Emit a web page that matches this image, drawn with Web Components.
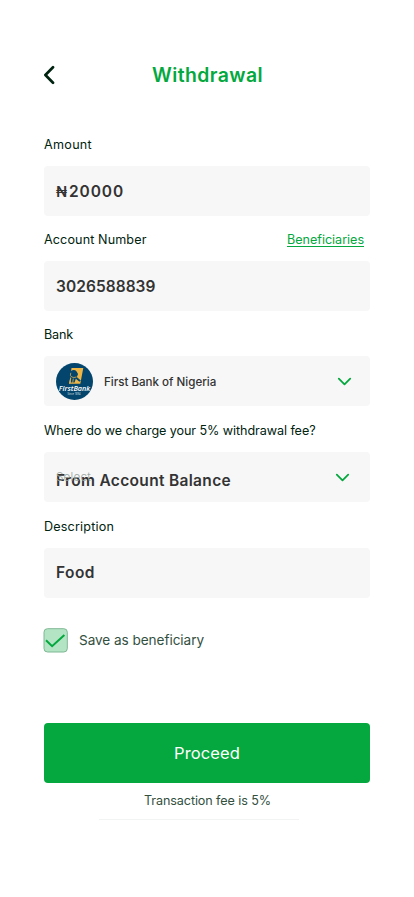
<!DOCTYPE html>
<html lang="en">
<head>
<meta charset="utf-8">
<title>Withdrawal</title>
<style>
html,body{margin:0;background:#fff}
body{font-family:Inter,"Liberation Sans",sans-serif;color:#002310}
</style>
</head>
<body>
<withdrawal-page></withdrawal-page>
<script>
const attach=(el,html)=>{el.attachShadow({mode:"open"}).innerHTML=html};

// Single line of text, tracked so that it fills the width given in "w".
customElements.define("tracked-text",class extends HTMLElement{
  connectedCallback(){
    if(this.shadowRoot)return;
    attach(this,`<style>:host{display:block;white-space:pre;flex:none}span{display:inline-block}:host([underlined]) span{text-decoration:underline;text-decoration-thickness:1px;text-underline-offset:2px;text-decoration-skip-ink:none}</style><span><slot></slot></span>`);
    const w=+this.getAttribute("w"),s=this.shadowRoot.querySelector("span");
    const n=this.textContent.length;
    this.style.width=w+"px";
    s.style.letterSpacing=((w-s.getBoundingClientRect().width)/n).toFixed(3)+"px";
  }
});

customElements.define("chevron-icon",class extends HTMLElement{
  constructor(){super();attach(this,`<style>:host{display:block;width:15px;height:9px}svg{display:block}</style>
  <svg width="15" height="9" viewBox="0 0 15 9" fill="none" stroke="#04a83e" stroke-width="1.8" stroke-linecap="round" stroke-linejoin="round"><path d="M1.8 1.7 7.5 7.3 13.2 1.7"/></svg>`)}
});

customElements.define("page-header",class extends HTMLElement{
  constructor(){super();attach(this,`<style>
  :host{display:grid;grid-template-columns:108px 1fr;align-items:center;height:30px;color:#04a83e;font-size:19.4px;font-weight:600;line-height:30px}
  svg{display:block}</style>
  <svg width="14" height="20" viewBox="0 0 14 20" fill="none" stroke="#002310" stroke-width="2.7" stroke-linecap="round" stroke-linejoin="round"><path d="M9 2.3 1.4 10 9 17.7"/></svg>
  <slot></slot>`)}
});

customElements.define("form-field",class extends HTMLElement{
  constructor(){super();attach(this,`<style>
  :host{display:block}
  .label{display:flex;justify-content:space-between;height:20px;font-size:12.6px;line-height:20px;margin-bottom:11px;padding-right:6px}
  .box{display:flex;align-items:center;box-sizing:border-box;height:50px;padding:0 12px;background:#f7f7f7;border-radius:4px;position:relative;color:#333;font-size:15.5px;font-weight:600;line-height:24px}
  ::slotted(.end){margin-left:auto}
  ::slotted([slot=action]){color:#04a83e}
  </style>
  <div class="label"><slot name="label"></slot><slot name="action"></slot></div>
  <div class="box"><slot></slot></div>`)}
});

customElements.define("bank-logo",class extends HTMLElement{
  constructor(){super();attach(this,`<style>:host{display:block;width:37px;height:37px;margin-right:11px}svg{display:block}</style>
  <svg width="37" height="37" viewBox="0 0 37 37">
  <circle cx="18.5" cy="18.5" r="18.5" fill="#03456d"/>
  <path d="M15.5 5H27.3L24.3 20.8H12.9L14.2 15Z" fill="#eeb545"/>
  <path d="M14.5 8.5Q18 5.8 20.6 8.4 22.6 10.4 21.4 12.8L20.8 14 24.8 17.6 23.4 18.8 19.8 15.8 18.6 19.5H14.8L14.8 15Q12.8 12 14.5 8.5Z" fill="#03456d"/>
  <path d="M14.8 9.8Q13.5 12.6 15.7 14 17.8 15 20.5 14M14.8 15 13.6 20.5M17.3 15.6 16.7 20" fill="none" stroke="#d9ae55" stroke-width=".8"/>
  <text x="2.8" y="28" textLength="31.4" lengthAdjust="spacingAndGlyphs" font-family="Open Sans,sans-serif" font-size="7.8" font-weight="600" font-style="italic" fill="#fff">FirstBank</text>
  <text x="11.5" y="32" textLength="13" lengthAdjust="spacingAndGlyphs" font-family="Open Sans,sans-serif" font-size="3" font-weight="600" fill="#b9cdd9">Since 1894</text>
  </svg>`)}
});

customElements.define("check-row",class extends HTMLElement{
  constructor(){super();attach(this,`<style>:host{display:flex;align-items:center;gap:11px;height:24px;font-size:13.6px;line-height:22px;color:#33503f}svg{display:block;overflow:visible}</style>
  <svg width="24" height="24" viewBox="0 0 24 24" fill="none"><rect x="0" y=".7" width="23.3" height="23.3" rx="3.5" fill="#b3e5c5" stroke="#7fb793"/><path d="M2 12.3 8.1 18.2 20.4 7" stroke="#04a83e" stroke-width="2"/></svg>
  <slot></slot>`)}
});

customElements.define("primary-button",class extends HTMLElement{
  constructor(){super();attach(this,`<style>:host{display:flex;align-items:center;justify-content:center;height:60px;background:#04a83e;border-radius:4px;color:#fff;font-size:16.5px;line-height:24px}</style><slot></slot>`)}
});

customElements.define("withdrawal-page",class extends HTMLElement{
  constructor(){super();attach(this,`<style>
  :host{display:block;box-sizing:border-box;width:414px;height:897px;padding:60px 44px 0;background:#fff}
  .fields{display:grid;row-gap:14px;margin-top:45px}
  .late{padding-top:1px}
  .value{padding-top:2px}
  .bank{font-size:11.6px;font-weight:500;padding-top:2px}
  .naira{font-size:14.5px;font-weight:600;margin-right:3px;padding-top:2px}
  .bankarrow{margin-right:6px}
  .feearrow{margin-right:8px}
  .chosen{padding-top:8px}
  .placeholder{position:absolute;left:12px;top:15px;line-height:20px;font-size:11.7px;font-weight:300;color:#9aa69f}
  .food{margin-top:-1px}
  check-row{margin-top:30px}
  primary-button{margin-top:71px}
  .note{margin:8px 0 0 100px;font-size:12.6px;line-height:20px;color:#33503f}
  .rule{width:200px;height:1px;margin:8px 0 0 55px;background:#f2f4f3}
  </style>
  <page-header><tracked-text w="111">Withdrawal</tracked-text></page-header>
  <div class="fields">
    <form-field><tracked-text slot="label" w="48">Amount</tracked-text><tracked-text class="naira" w="10">₦</tracked-text><tracked-text class="value" w="55">20000</tracked-text></form-field>
    <form-field><tracked-text slot="label" w="102.5">Account Number</tracked-text><tracked-text slot="action" underlined w="77">Beneficiaries</tracked-text><tracked-text class="value" w="99.5">3026588839</tracked-text></form-field>
    <form-field><tracked-text slot="label" w="29">Bank</tracked-text><bank-logo></bank-logo><tracked-text class="bank" w="112.3">First Bank of Nigeria</tracked-text><chevron-icon class="end bankarrow"></chevron-icon></form-field>
    <form-field class="late"><tracked-text slot="label" w="271.5">Where do we charge your 5% withdrawal fee?</tracked-text><tracked-text class="placeholder" w="35">Select</tracked-text><tracked-text class="chosen" w="175">From Account Balance</tracked-text><chevron-icon class="end feearrow"></chevron-icon></form-field>
    <form-field class="late"><tracked-text slot="label" w="70">Description</tracked-text><tracked-text class="food" w="39">Food</tracked-text></form-field>
  </div>
  <check-row><tracked-text w="125">Save as beneficiary</tracked-text></check-row>
  <primary-button><tracked-text w="66">Proceed</tracked-text></primary-button>
  <tracked-text class="note" w="127">Transaction fee is 5%</tracked-text>
  <div class="rule"></div>`)}
});
</script>
</body>
</html>
